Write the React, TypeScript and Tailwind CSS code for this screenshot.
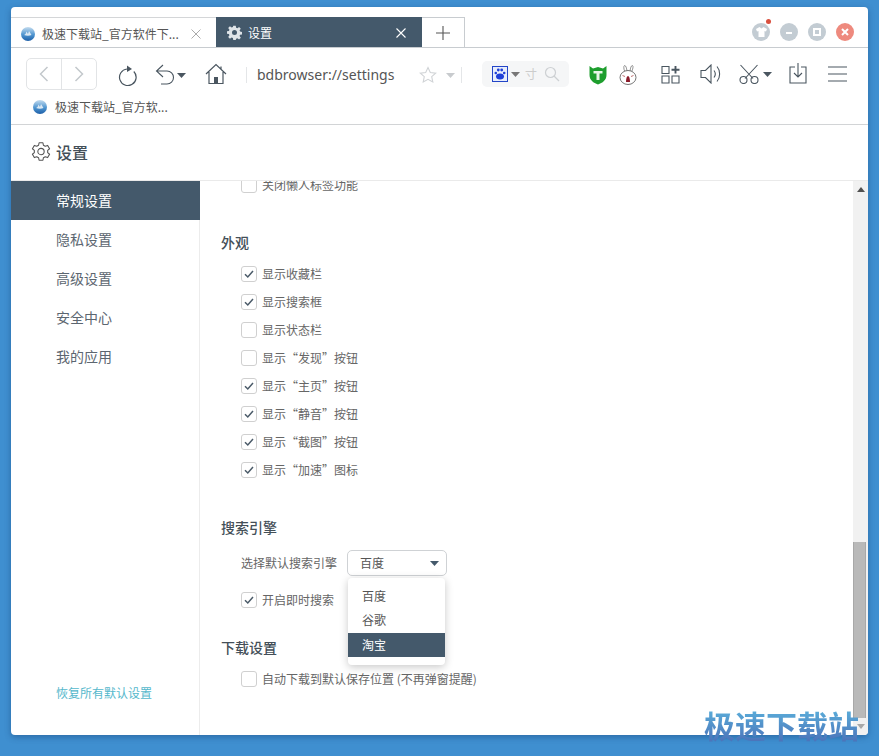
const font = "font-['Noto_Sans_CJK_SC','Liberation_Sans',sans-serif]"

function Caret({ className = '' }: { className?: string }) {
  return (
    <svg width="9" height="5" viewBox="0 0 9 5" className={className}>
      <path d="M0 0h9L4.500 5z" fill="currentColor" />
    </svg>
  )
}

function Globe({ x = 0 }: { x?: number }) {
  return (
    <svg width="14" height="14" viewBox="0 0 14 14" style={{ marginLeft: x }} className="shrink-0">
      <defs>
        <linearGradient id={`g${x}`} x1="0" y1="0" x2="0" y2="1">
          <stop offset="0" stopColor="#c4dcef" />
          <stop offset="0.55" stopColor="#4f95d0" />
          <stop offset="1" stopColor="#1d5fa8" />
        </linearGradient>
      </defs>
      <circle cx="7" cy="7" r="7" fill={`url(#g${x})`} />
      <path d="M3 8c1.500-.4 2-1.500 2.500-3.500L7 7l1-3 2.500 4c-2 1-5 1-7.500 0z" fill="#f3f6f8" opacity=".85" />
    </svg>
  )
}

function Check({ checked, children }: { checked?: boolean; children: React.ReactNode }) {
  return (
    <label className="flex h-[28px] items-center gap-[5px] pl-[20px] text-[12px] text-[#666]">
      <span className="flex h-[16px] w-[16px] items-center justify-center rounded-[3px] border border-[#d0d0d0] bg-white">
        {checked && (
          <svg width="12" height="12" viewBox="0 0 12 12">
            <path d="M2 6.200 4.800 9 10 3" fill="none" stroke="#4a5a68" strokeWidth="1.500" />
          </svg>
        )}
      </span>
      <span>{children}</span>
    </label>
  )
}

function Heading({ className, children }: { className: string; children: React.ReactNode }) {
  return <div className={`h-[20px] text-[14px] leading-[20px] font-medium text-[#444f58] ${className}`}>{children}</div>
}

function Dot({ className, children }: { className: string; children?: React.ReactNode }) {
  return <div className={`flex h-[18px] w-[18px] items-center justify-center rounded-full ${className}`}>{children}</div>
}

function Toolbar() {
  return (
    <div className="flex h-[44px] items-center text-[#4a5660]">
      <div className="-mt-[2px] ml-[15px] flex h-[32px] w-[71px] rounded-[5px] border border-[#e2e4e6]">
        <div className="flex w-[35px] items-center justify-center border-r border-[#e2e4e6]">
          <svg width="10" height="16" viewBox="0 0 10 16"><path d="M8.500 1 1.500 8l7 7" fill="none" stroke="#c3c8cc" strokeWidth="1.500" /></svg>
        </div>
        <div className="flex flex-1 items-center justify-center">
          <svg width="10" height="16" viewBox="0 0 10 16"><path d="m1.500 1 7 7-7 7" fill="none" stroke="#c3c8cc" strokeWidth="1.500" /></svg>
        </div>
      </div>
      <svg width="20" height="22" viewBox="0 0 20 22" className="ml-[21px]">
        <path d="M15.800 7.500A8.300 8.300 0 1 1 9 5" fill="none" stroke="currentColor" strokeWidth="1.200" />
        <path d="M9 1.500 14 5 9 8z" fill="currentColor" />
      </svg>
      <svg width="20" height="22" viewBox="0 0 20 22" className="ml-[17px]">
        <path d="M8 1 1.500 7 8 13M1.500 7H12a6.500 6.500 0 0 1 0 13H6" fill="none" stroke="currentColor" strokeWidth="1.100" />
      </svg>
      <Caret className="ml-[2px] text-[#4a5660]" />
      <svg width="22" height="22" viewBox="0 0 22 22" className="-mt-[2px] ml-[19px]">
        <path d="M1 11 11 1.500 21 11M4 9v11.500h14V9M16 3.500V6" fill="none" stroke="currentColor" strokeWidth="1.200" />
        <rect x="9" y="14" width="4" height="6.500" fill="currentColor" />
      </svg>
      <div className="ml-[19px] h-[16px] w-px bg-[#e4e6e8]" />
      <div className="-mt-[2px] ml-[10px] w-[152px] font-['Noto_Sans','Liberation_Sans',sans-serif] text-[14px] text-[#555]">bdbrowser://settings</div>
      <svg width="18" height="18" viewBox="0 0 18 18" className="ml-[10px]">
        <path d="m9 1.500 2.300 5 5.400.6-4 3.600 1.100 5.300L9 13.300 4.200 16l1.100-5.300-4-3.600 5.400-.6z" fill="none" stroke="#d0d3d6" strokeWidth="1.100" />
      </svg>
      <Caret className="ml-[9px] text-[#c8cbce]" />
      <div className="ml-[6px] h-[16px] w-px bg-[#e4e6e8]" />
      <div className="-mt-[2px] ml-[20px] flex h-[26px] w-[87px] items-center rounded-[5px] bg-[#f5f6f7] pl-[10px]">
        <svg width="16" height="16" viewBox="0 0 16 16">
          <rect x=".5" y=".5" width="15" height="15" fill="#e8eefc" stroke="#2345c8" />
          <ellipse cx="8" cy="10.500" rx="4" ry="3" fill="#2040d8" />
          <circle cx="3.800" cy="7" r="1.300" fill="#2040d8" />
          <circle cx="6.300" cy="4" r="1.400" fill="#2040d8" />
          <circle cx="9.700" cy="4" r="1.400" fill="#2040d8" />
          <circle cx="12.200" cy="7" r="1.300" fill="#2040d8" />
        </svg>
        <Caret className="ml-[3px] text-[#777]" />
        <span className={`ml-[5px] text-[12px] text-[#ccc] ${font}`}>寸</span>
        <svg width="16" height="16" viewBox="0 0 16 16" className="ml-[7px]">
          <circle cx="6.500" cy="6.500" r="5" fill="none" stroke="#cdd0d3" strokeWidth="1.200" />
          <path d="m10 10 5 5" stroke="#cdd0d3" strokeWidth="1.300" />
        </svg>
      </div>
      <svg width="18" height="20" viewBox="0 0 18 20" className="ml-[20px]">
        <path d="M.5 1 4 3.500 9 2l5 1.500L17.500 1v9c0 5-4 8-8.500 9.500C4.500 18 .5 15 .5 10z" fill="#1e9e2e" />
        <path d="M4.500 6h9v2.500h-3V15h-3V8.500h-3z" fill="#e8f6e8" />
      </svg>
      <svg width="18" height="22" viewBox="0 0 18 22" className="ml-[12px]">
        <path d="M6 8C4.500 5 4.500 2 5.500 1.500 7 1.500 7.500 4 8 7M11 7c.5-3 1-5.500 2.500-5.500C14.500 2 14 5 12.500 8" fill="#fff" stroke="#777" strokeWidth=".8" />
        <ellipse cx="9" cy="13.500" rx="8" ry="7" fill="#fff" stroke="#666" strokeWidth=".9" />
        <path d="M3.500 11.500 6 12.500M14.500 11.500 12 12.500" stroke="#b05050" strokeWidth=".8" />
        <path d="M7 18c0-4 1-6 2-6s2 2 2 6z" fill="#8b1a2a" />
      </svg>
      <svg width="19" height="19" viewBox="0 0 19 19" className="-mt-[2px] ml-[24px]">
        <path d="M1 1.500h7v7H1zM1 11h7v7H1zM11 11h7v7h-7z" fill="none" stroke="currentColor" strokeWidth="1.100" />
        <path d="M14.500 1v7.500M10.500 4.800h8" stroke="currentColor" strokeWidth="1.900" />
      </svg>
      <svg width="22" height="20" viewBox="0 0 22 20" className="-mt-[2px] ml-[20px]">
        <path d="M1 6.500h4.500L11 1v18l-5.500-5.500H1z" fill="none" stroke="currentColor" strokeWidth="1.100" />
        <path d="M14 6.500c1.500 2 1.500 5 0 7M17 2.500c3.500 4 3.500 11 0 15" fill="none" stroke="currentColor" strokeWidth="1.100" />
      </svg>
      <svg width="20" height="20" viewBox="0 0 20 20" className="-mt-[2px] ml-[17px]">
        <path d="M1.500 1 14 14.500M18.500 1 6 14.500" stroke="currentColor" strokeWidth="1.100" />
        <circle cx="4.500" cy="16" r="3.500" fill="none" stroke="currentColor" strokeWidth="1.100" />
        <circle cx="15.500" cy="16" r="3.500" fill="none" stroke="currentColor" strokeWidth="1.100" />
      </svg>
      <Caret className="-mt-[2px] ml-[4px] text-[#4a5660]" />
      <svg width="18" height="21" viewBox="0 0 18 21" className="-mt-[3px] ml-[17px]">
        <path d="M6 4H1v16h16V4h-5" fill="none" stroke="currentColor" strokeWidth="1.100" />
        <path d="M9 0v14M5 10l4 4 4-4" fill="none" stroke="currentColor" strokeWidth="1.100" />
      </svg>
      <svg width="19" height="16" viewBox="0 0 19 16" className="-mt-[2px] ml-[21px]">
        <path d="M0 1h19M0 8h19M0 15h19" stroke="currentColor" strokeWidth="1.100" />
      </svg>
    </div>
  )
}

export default function App() {
  const nav = ['隐私设置', '高级设置', '安全中心', '我的应用']
  return (
    <div className={`relative h-[756px] w-[879px] overflow-hidden bg-[#3f8fd0] pl-[11px] pt-[7px] ${font}`}>
      <div className="flex h-[728px] w-[857px] flex-col overflow-hidden rounded-[4px] bg-white shadow-[0_2px_6px_rgba(20,60,110,0.45)]">
        {/* title bar */}
        <div className="flex h-[41px] shrink-0 items-end border-b border-[#c8ccd0] pt-[11px]">
          <div className="flex h-[30px] w-[205px] items-center border-t border-[#d4d6d8] pl-[10px] pr-[15px] pt-[2px] text-[12px] text-[#555]">
            <Globe />
            <span className="ml-[7px] flex-1">极速下载站_官方软件下...</span>
            <svg width="10" height="10" viewBox="0 0 10 10"><path d="m.5.500 9 9m0-9-9 9" stroke="#aaa" strokeWidth="1" /></svg>
          </div>
          <div className="flex h-[30px] w-[206px] items-center bg-[#44596b] pl-[11px] pr-[16px] pt-[1px] text-[12px] text-white">
            <svg width="15" height="15" viewBox="0 0 24 24" fill="#dfe4e8">
              <path d="M10 1h4l.6 3.200 2 .8L19.300 3l2.800 2.800-2 2.700.8 2 3.100.5v4l-3.100.5-.8 2 2 2.700-2.800 2.800-2.700-2-2 .8L14 24h-4l-.6-3.200-2-.8-2.700 2-2.800-2.800 2-2.700-.8-2L0 14v-4l3.100-.5.8-2-2-2.700L4.700 2l2.700 2 2-.8zM12 8a4 4 0 1 0 0 8 4 4 0 0 0 0-8z" fillRule="evenodd" />
            </svg>
            <span className="ml-[6px] flex-1">设置</span>
            <svg width="10" height="10" viewBox="0 0 10 10"><path d="m.5.500 9 9m0-9-9 9" stroke="#fff" strokeWidth="1.100" /></svg>
          </div>
          <div className="flex h-[30px] w-[43px] items-center justify-center border-r border-t border-[#c8ccd0]">
            <svg width="14" height="14" viewBox="0 0 14 14"><path d="M7 0v14M0 7h14" stroke="#555" strokeWidth="1.100" /></svg>
          </div>
          <div className="ml-auto mb-[2px] flex gap-[10px] self-center pr-[14px]">
            <Dot className="relative bg-[#c3ccd3]">
              <svg width="11" height="10" viewBox="0 0 11 10"><path d="M3.500 0 0 2l1 2.500 1.500-.5v6h6V4l1.500.5L11 2 7.500 0 5.500 1.500z" fill="#fff" /></svg>
              <span className="absolute right-[-1px] top-[-4px] h-[5px] w-[5px] rounded-full bg-[#d9503f]" />
            </Dot>
            <Dot className="bg-[#c3ccd3]"><span className="mt-[2px] h-[2px] w-[6px] bg-white" /></Dot>
            <Dot className="bg-[#c3ccd3]"><span className="h-[8px] w-[8px] border-2 border-white" /></Dot>
            <Dot className="bg-[#ee8a7e]">
              <svg width="8" height="8" viewBox="0 0 8 8"><path d="m1 1 6 6m0-6-6 6" stroke="#fff" strokeWidth="2" /></svg>
            </Dot>
          </div>
        </div>

        {/* toolbar and bookmarks */}
        <div className="h-[77px] shrink-0 border-b border-[#d2d4d6] pt-[5px]">
          <Toolbar />
          <div className="mt-[1px] flex items-center text-[12px] text-[#555]">
            <Globe x={22} />
            <span className="ml-[8px]">极速下载站_官方软...</span>
          </div>
        </div>

        {/* page header */}
        <div className="flex h-[56px] shrink-0 items-center border-b border-[#eaeaea] pb-[2px] pl-[20px]">
          <svg width="20" height="21" viewBox="0 0 24 24" fill="none" stroke="#555" strokeWidth="1.300" strokeLinejoin="round">
            <path d="M9.700 1.500h4.600l.6 3 2.200 1.200 2.900-1 2.300 4-2.300 2v2.600l2.300 2-2.300 4-2.900-1-2.200 1.200-.6 3H9.700l-.6-3-2.200-1.200-2.900 1-2.300-4 2.300-2v-2.600l-2.300-2 2.300-4 2.900 1 2.200-1.200z" />
            <circle cx="12" cy="12" r="3.800" />
          </svg>
          <span className="ml-[5px] text-[16px] font-medium text-[#444f58]">设置</span>
        </div>

        {/* body */}
        <div className="flex min-h-0 flex-1">
          <aside className="flex w-[189px] shrink-0 flex-col border-r border-[#ececec] pb-[33px]">
            <div className="-mr-px flex h-[39px] items-center bg-[#44596b] pl-[45px] text-[14px] text-white">常规设置</div>
            {nav.map(n => (
              <div key={n} className="flex h-[39px] items-center pl-[45px] text-[14px] text-[#5c6670]">{n}</div>
            ))}
            <div className="mt-auto pl-[45px] text-[12px] text-[#55b8cc]">恢复所有默认设置</div>
          </aside>

          <main className="min-w-0 flex-1 overflow-hidden pl-[21px]">
            <div className="-mt-[10px] flex flex-col">
              <Check>关闭懒人标签功能</Check>
              <Heading className="mt-[33px]">外观</Heading>
              <div className="mt-[8px]">
                <Check checked>显示收藏栏</Check>
                <Check checked>显示搜索框</Check>
                <Check>显示状态栏</Check>
                <Check>显示“发现”按钮</Check>
                <Check checked>显示“主页”按钮</Check>
                <Check checked>显示“静音”按钮</Check>
                <Check checked>显示“截图”按钮</Check>
                <Check checked>显示“加速”图标</Check>
              </div>
              <Heading className="mt-[33px]">搜索引擎</Heading>
              <div className="mt-[13px] flex h-[26px] items-center pl-[20px] text-[12px] text-[#666]">
                <span>选择默认搜索引擎</span>
                <div className="relative ml-[10px] flex h-[26px] w-[100px] items-center rounded-[5px] border border-[#cfd2d5] bg-white pl-[12px] pr-[7px] text-[#555]">
                  <span className="flex-1">百度</span>
                  <Caret className="text-[#44596b]" />
                  <div className="absolute left-[0px] top-[27px] z-10 w-[97px] rounded-[4px] bg-white pb-[8px] pt-[6px] shadow-[0_2px_8px_rgba(0,0,0,0.22)]">
                    <div className="flex h-[24px] items-center pl-[14px]">百度</div>
                    <div className="flex h-[24px] items-center pl-[14px]">谷歌</div>
                    <div className="mt-px flex h-[24px] items-center bg-[#44596b] pl-[14px] text-white">淘宝</div>
                  </div>
                </div>
              </div>
              <div className="mt-[10px]"><Check checked>开启即时搜索</Check></div>
              <Heading className="mt-[23px]">下载设置</Heading>
              <div className="mt-[8px]"><Check>自动下载到默认保存位置 (不再弹窗提醒)</Check></div>
            </div>
          </main>

          {/* scrollbar */}
          <div className="flex w-[15px] shrink-0 flex-col bg-[#f1f1f1]">
            <div className="flex h-[17px] items-center justify-center">
              <svg width="8" height="5" viewBox="0 0 8 5"><path d="M4 0l4 5H0z" fill="#505050" /></svg>
            </div>
            <div className="flex-1" />
            <div className="mr-[2px] h-[176px] border-x border-[#a8a8a8] bg-[#b9b9b9]" />
            <div className="flex h-[17px] items-center justify-center">
              <svg width="8" height="5" viewBox="0 0 8 5"><path d="M0 0h8L4 5z" fill="#a8a8a8" /></svg>
            </div>
          </div>
        </div>
      </div>

      {/* site watermark */}
      <div className="absolute left-[704px] top-[705px] bg-gradient-to-b from-[#5cb6de] to-[#4a6db6] bg-clip-text text-[31px] font-bold leading-[40px] text-transparent">极速下载站</div>
    </div>
  )
}
